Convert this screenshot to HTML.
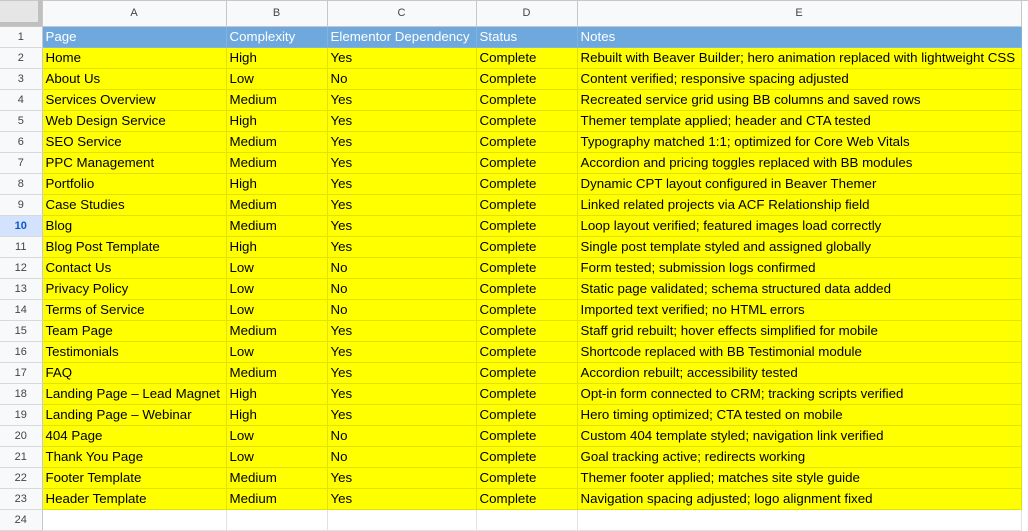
<!DOCTYPE html>
<html><head><style>
body{margin:0;width:1028px;height:522px;overflow:hidden;background:#fff;font-family:"Liberation Sans",Arial,sans-serif;position:relative;}
table{border-collapse:collapse;table-layout:fixed;position:absolute;left:0;top:0;}
td{box-sizing:border-box;height:21px;padding:0 0 0 3px;font-size:13.3px;color:#000;white-space:nowrap;overflow:hidden;border-right:1px solid #e2e2e2;border-bottom:1px solid #e2e2e2;line-height:20px;}
tr.ch td{height:26px;background:#f8f9fa;color:#444;font-size:11px;text-align:center;padding:0;border-color:#c7c7c7;}
tr.ch td.corner{background:#e6e6e6;}
td.rh{background:#f8f9fa;color:#444;font-size:11px;text-align:center;padding:0;border-right:1px solid #c7c7c7;border-bottom:1px solid #d9d9d9;}
td.rh.sel{background:#d3e3fd;color:#0b57d0;font-weight:bold;}
tr.h td:not(.rh){background:#6fa8dc;color:#fff;border-color:#7fb3e0;}
tr.y td:not(.rh){background:#ffff00;border-color:#e3e300;}
.vl{position:absolute;left:38px;top:0;width:4px;height:26px;background:#c0c0c0;}
.hl{position:absolute;left:0;top:22px;width:42px;height:4px;background:#c0c0c0;}
.tl{position:absolute;left:0;top:0;width:1028px;height:1px;background:#c7c7c7;}
</style></head><body>
<table>
<colgroup><col style="width:42px"><col style="width:184px"><col style="width:101px"><col style="width:149px"><col style="width:101px"><col style="width:444px"></colgroup>
<tr class="ch"><td class="corner"></td><td>A</td><td>B</td><td>C</td><td>D</td><td>E</td></tr>
<tr class="h"><td class="rh">1</td><td>Page</td><td>Complexity</td><td>Elementor Dependency</td><td>Status</td><td>Notes</td></tr>
<tr class="y"><td class="rh">2</td><td>Home</td><td>High</td><td>Yes</td><td>Complete</td><td>Rebuilt with Beaver Builder; hero animation replaced with lightweight CSS</td></tr>
<tr class="y"><td class="rh">3</td><td>About Us</td><td>Low</td><td>No</td><td>Complete</td><td>Content verified; responsive spacing adjusted</td></tr>
<tr class="y"><td class="rh">4</td><td>Services Overview</td><td>Medium</td><td>Yes</td><td>Complete</td><td>Recreated service grid using BB columns and saved rows</td></tr>
<tr class="y"><td class="rh">5</td><td>Web Design Service</td><td>High</td><td>Yes</td><td>Complete</td><td>Themer template applied; header and CTA tested</td></tr>
<tr class="y"><td class="rh">6</td><td>SEO Service</td><td>Medium</td><td>Yes</td><td>Complete</td><td>Typography matched 1:1; optimized for Core Web Vitals</td></tr>
<tr class="y"><td class="rh">7</td><td>PPC Management</td><td>Medium</td><td>Yes</td><td>Complete</td><td>Accordion and pricing toggles replaced with BB modules</td></tr>
<tr class="y"><td class="rh">8</td><td>Portfolio</td><td>High</td><td>Yes</td><td>Complete</td><td>Dynamic CPT layout configured in Beaver Themer</td></tr>
<tr class="y"><td class="rh">9</td><td>Case Studies</td><td>Medium</td><td>Yes</td><td>Complete</td><td>Linked related projects via ACF Relationship field</td></tr>
<tr class="y"><td class="rh sel">10</td><td>Blog</td><td>Medium</td><td>Yes</td><td>Complete</td><td>Loop layout verified; featured images load correctly</td></tr>
<tr class="y"><td class="rh">11</td><td>Blog Post Template</td><td>High</td><td>Yes</td><td>Complete</td><td>Single post template styled and assigned globally</td></tr>
<tr class="y"><td class="rh">12</td><td>Contact Us</td><td>Low</td><td>No</td><td>Complete</td><td>Form tested; submission logs confirmed</td></tr>
<tr class="y"><td class="rh">13</td><td>Privacy Policy</td><td>Low</td><td>No</td><td>Complete</td><td>Static page validated; schema structured data added</td></tr>
<tr class="y"><td class="rh">14</td><td>Terms of Service</td><td>Low</td><td>No</td><td>Complete</td><td>Imported text verified; no HTML errors</td></tr>
<tr class="y"><td class="rh">15</td><td>Team Page</td><td>Medium</td><td>Yes</td><td>Complete</td><td>Staff grid rebuilt; hover effects simplified for mobile</td></tr>
<tr class="y"><td class="rh">16</td><td>Testimonials</td><td>Low</td><td>Yes</td><td>Complete</td><td>Shortcode replaced with BB Testimonial module</td></tr>
<tr class="y"><td class="rh">17</td><td>FAQ</td><td>Medium</td><td>Yes</td><td>Complete</td><td>Accordion rebuilt; accessibility tested</td></tr>
<tr class="y"><td class="rh">18</td><td>Landing Page – Lead Magnet</td><td>High</td><td>Yes</td><td>Complete</td><td>Opt-in form connected to CRM; tracking scripts verified</td></tr>
<tr class="y"><td class="rh">19</td><td>Landing Page – Webinar</td><td>High</td><td>Yes</td><td>Complete</td><td>Hero timing optimized; CTA tested on mobile</td></tr>
<tr class="y"><td class="rh">20</td><td>404 Page</td><td>Low</td><td>No</td><td>Complete</td><td>Custom 404 template styled; navigation link verified</td></tr>
<tr class="y"><td class="rh">21</td><td>Thank You Page</td><td>Low</td><td>No</td><td>Complete</td><td>Goal tracking active; redirects working</td></tr>
<tr class="y"><td class="rh">22</td><td>Footer Template</td><td>Medium</td><td>Yes</td><td>Complete</td><td>Themer footer applied; matches site style guide</td></tr>
<tr class="y"><td class="rh">23</td><td>Header Template</td><td>Medium</td><td>Yes</td><td>Complete</td><td>Navigation spacing adjusted; logo alignment fixed</td></tr>
<tr><td class="rh">24</td><td></td><td></td><td></td><td></td><td></td></tr>
</table>
<div class="tl"></div><div class="vl"></div><div class="hl"></div>
</body></html>
